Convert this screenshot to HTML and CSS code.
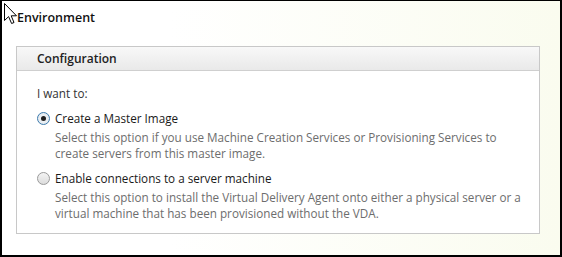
FILE: index.html
```html
<!DOCTYPE html>
<html>
<head>
    <title>Environment</title>
    <link rel="stylesheet" href="styles.css">
</head>
<body>
    <div class="frame">
        <svg class="cursor" width="14" height="22" viewBox="0 0 14 22">
            <polygon points="0.5,0.5 0.5,17.5 4.6,13.6 7.6,20.5 10,19.5 7.2,12.8 12.5,12.8" fill="#fff" stroke="#000" stroke-width="1"/>
        </svg>
        <div class="title">Environment</div>

        <div class="panel">
            <div class="panel-header">Configuration</div>
            <div class="panel-body">
                <div class="prompt">I want to:</div>

                <div class="option">
                    <span class="radio checked"></span>
                    <div class="option-text">
                        <div class="option-label">Create a Master Image</div>
                        <div class="option-desc">Select this option if you use Machine Creation Services or Provisioning Services to create servers from this master image.</div>
                    </div>
                </div>

                <div class="option">
                    <span class="radio"></span>
                    <div class="option-text">
                        <div class="option-label">Enable connections to a server machine</div>
                        <div class="option-desc">Select this option to install the Virtual Delivery Agent onto either a physical server or a virtual machine that has been provisioned without the VDA.</div>
                    </div>
                </div>
            </div>
        </div>
    </div>
</body>
</html>
```

FILE: styles.css
```css
body, html {
    margin: 0;
    height: 100%;
}

body {
    font-family: 'Open Sans', 'Noto Sans', sans-serif;
    color: #222;
}

.frame {
    position: relative;
    box-sizing: border-box;
    width: 562px;
    height: 257px;
    border: 2px solid #000;
    border-top-width: 1px;
    background: linear-gradient(90deg, #ffffff 0%, #ffffff 30%, #fafcef 100%);
    padding: 7px 0 0 14px;
}

.cursor {
    position: absolute;
    top: 2px;
    left: 2px;
}

.title {
    font-size: 12.5px;
    font-weight: 600;
    color: #111;
    padding-left: 1px;
    height: 22px;
    line-height: 20px;
}

.panel {
    margin-top: 16px;
    width: 524px;
    border: 1px solid #c8c8c8;
    background: #fff;
    height: 188px;
    box-sizing: border-box;
}

.panel-header {
    height: 23px;
    line-height: 24px;
    padding-left: 20px;
    font-size: 12px;
    font-weight: 600;
    color: #222;
    background: linear-gradient(180deg, #f8f8f8 0%, #e9e9e9 100%);
    border-bottom: 1px solid #cfcfcf;
}

.panel-body {
    padding: 14px 0 0 20px;
    font-size: 11.7px;
}

.prompt {
    line-height: 16px;
    color: #333;
    margin-bottom: 9px;
}

.option {
    display: flex;
    align-items: flex-start;
    margin-bottom: 9px;
}

.radio {
    flex: none;
    width: 11px;
    height: 11px;
    margin: 2px 5px 0 0;
    border-radius: 50%;
    border: 1px solid #9a9a9a;
    background: linear-gradient(180deg, #f4f4f4 0%, #dcdcdc 100%);
    display: flex;
    align-items: center;
    justify-content: center;
}

.radio.checked {
    border-color: #3d7bad;
    background: radial-gradient(circle, #f6f6f6 0%, #dde6ee 100%);
}

.radio.checked::after {
    content: '';
    width: 5px;
    height: 5px;
    border-radius: 50%;
    background: #1f1f1f;
}

.option-label {
    line-height: 16px;
    color: #1a1a1a;
    margin-bottom: 3px;
}

.option-desc {
    line-height: 16px;
    color: #6d6d6d;
    width: 474px;
}
```
